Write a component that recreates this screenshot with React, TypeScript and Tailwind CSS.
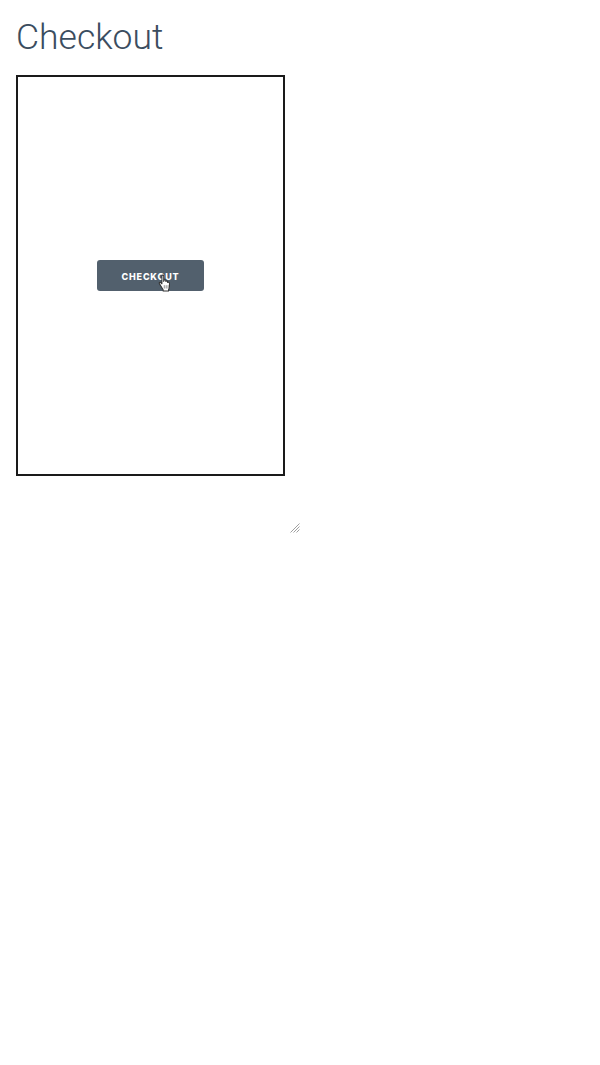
import React from "react";

function HandCursor() {
  return (
    <svg
      className="absolute left-[61px] top-[14px]"
      width="14"
      height="19"
      viewBox="0 0 12.5 17"
    >
      <path
        d="M3.5 1.6c0-.8 1.6-.8 1.6 0v5l.3-.9c.2-.7 1.6-.6 1.6.2v.8c.2-.7 1.6-.6 1.6.2v.8c.3-.6 1.6-.5 1.6.3v3.4c0 1.2-.3 1.8-.8 2.6v1.2H4.6v-1.2L1.2 8.6c-.5-.8.5-1.5 1.2-.9l1.1 1.1z"
        fill="#fff"
        stroke="#333"
        strokeWidth="0.9"
        strokeLinejoin="round"
      />
      <path d="M5.6 10v3M7.3 10v3M9 10v3" stroke="#555" strokeWidth="0.6" />
    </svg>
  );
}

function ResizeGrip() {
  return (
    <svg className="block" width="10" height="10" viewBox="0 0 10 10">
      <path d="M0.5 9.5L9.5 0.5M3.5 9.5L9.5 3.5M6.5 9.5L9.5 6.5" stroke="#888" strokeWidth="0.8" />
    </svg>
  );
}

export default function App() {
  return (
    <div className="min-h-[1065px] bg-white px-4 pt-[14px] font-['Roboto',sans-serif]">
      <h1 className="text-[35.5px] font-light leading-[47px] text-[#3b4d5f]">Checkout</h1>

      <div className="w-[284px]">
        <div className="mt-[14px] flex h-[401px] w-[269px] items-center justify-center border-2 border-[#1a1a1a]">
          {/* Button */}
          <div className="relative">
            <button className="flex h-[31px] w-[107px] items-center justify-center rounded-[3px] bg-[#52606d] pt-[2px] font-['Inter',sans-serif] text-[9px] font-extrabold tracking-[0.8px] text-white">
              CHECKOUT
            </button>
            <HandCursor />
          </div>
        </div>

        {/* Resize handle of the surrounding frame */}
        <div className="mt-[47px] flex justify-end">
          <ResizeGrip />
        </div>
      </div>
    </div>
  );
}
